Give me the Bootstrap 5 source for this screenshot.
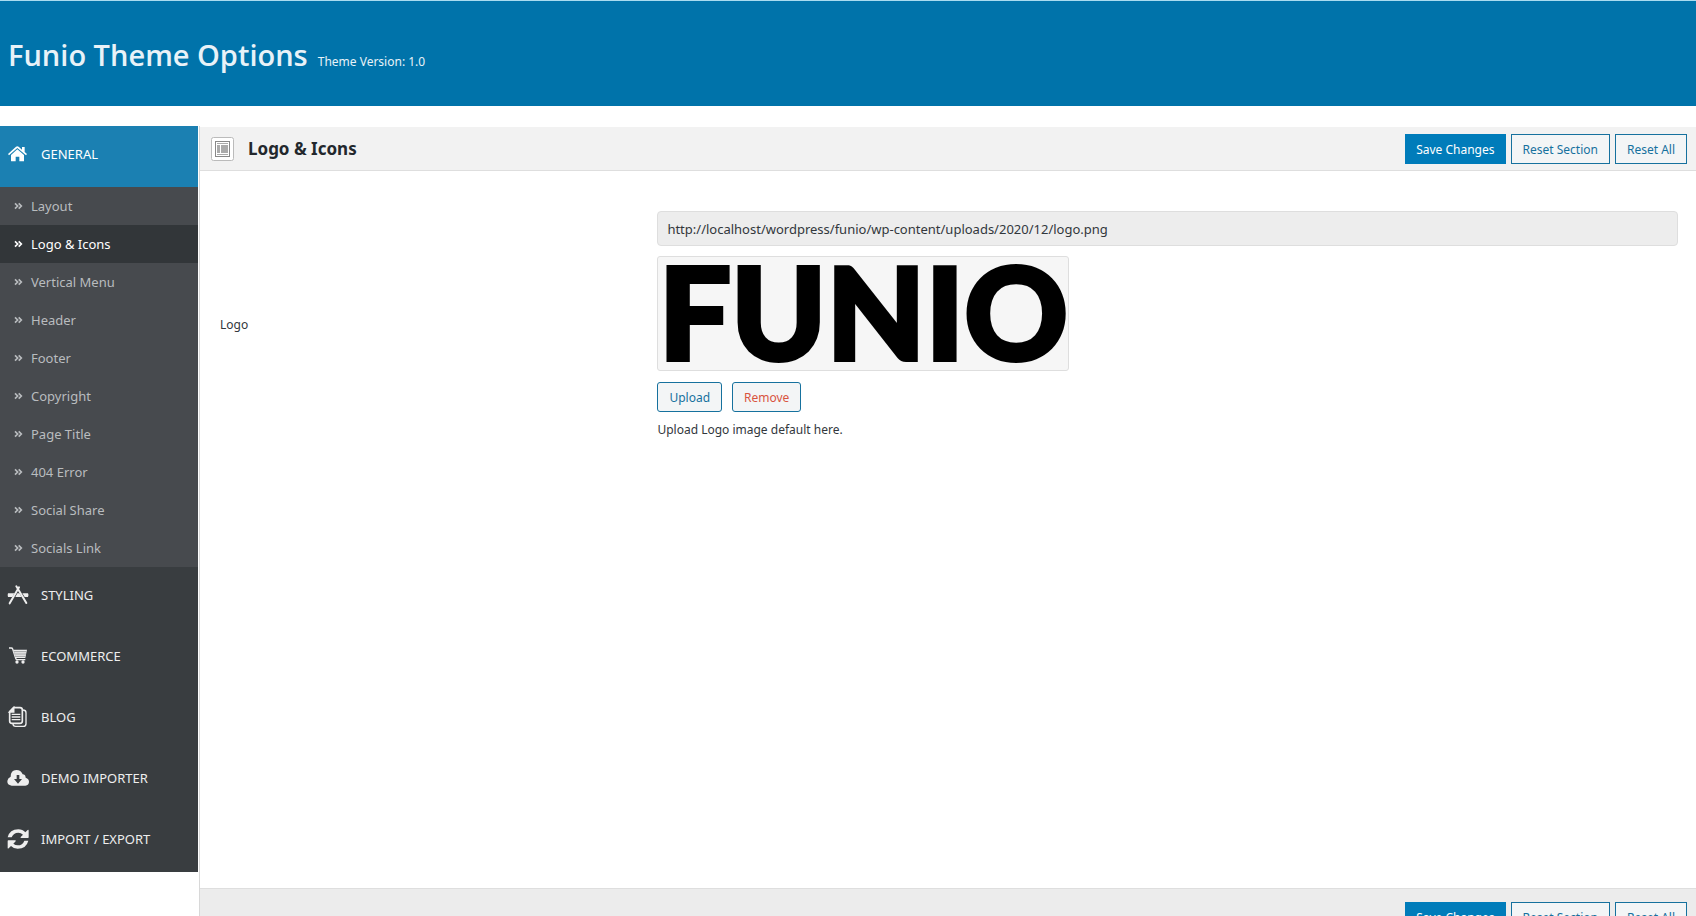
<!DOCTYPE html>
<html lang="en">
<head>
<meta charset="utf-8">
<meta name="viewport" content="width=device-width, initial-scale=1">
<title>Funio Theme Options</title>
<link href="https://cdn.jsdelivr.net/npm/bootstrap@5.3.0/dist/css/bootstrap.min.css" rel="stylesheet">
<style>
  body { font-family: "Noto Sans", "Open Sans", sans-serif; font-size: 12px; line-height: 18px; color: #32373c; }
  .page { height: calc(100vh + 32px); }
  .top-bar { height: 106px; background: #0073aa; border-top: 1px solid #a9dcf0; color: #e8f2f8; padding-top: 2px; }
  .top-bar h1 { font-family: "Open Sans", sans-serif; font-size: 29px; line-height: 40px; font-weight: 600; }
  .top-title { gap: 10px; }
  .body-area { padding-top: 20px; }
  .side { width: 198px; margin-right: 1px; }
  .side a { text-decoration: none; font-size: 13px; }
  .group-link { height: 61px; padding: 0 7px 5px; gap: 12px; background: #393d40; color: #eee; }
  .group-link.current { background: #1b80b2; color: #fff; }
  .group-link svg { width: 22px; height: 22px; flex: none; }
  .sub-link { height: 38px; padding: 0 14px; gap: 8px; background: #474a4e; color: #b9bcbf; }
  .sub-link.current { background: #323639; color: #fff; }
  .sub-link svg { width: 9px; height: 8px; flex: none; }
  .panel { border-left: 1px solid #d8d8d8; }
  .info-bar { height: 45px; background: #f2f2f2; border-bottom: 1px solid #dedede; border-top: 1px solid #fff; padding: 0 9px 0 11px; gap: 14px; }
  .info-bar h2 { font-size: 17px; line-height: 24px; font-weight: 700; color: #23282d; }
  .foot-bar { height: 60px; background: #ececec; border-top: 1px solid #dedede; padding: 13px 9px 0; }
  .act-row { gap: 5px; }
  .wp-btn { --bs-btn-font-size: 12px; --bs-btn-line-height: 26px; --bs-btn-padding-x: 11px; --bs-btn-border-radius: 0;
    --bs-btn-color: #16719e; --bs-btn-bg: #f3f5f6; --bs-btn-border-color: #16719e; padding-top: 2px; padding-bottom: 0; }
  .wp-btn.primary { --bs-btn-padding-x: 10px; --bs-btn-color: #fff; --bs-btn-bg: #007cba; --bs-btn-border-color: #007cba; }
  .wp-btn.rounded-btn { --bs-btn-border-radius: 3px; }
  .wp-btn.remove { --bs-btn-color: #d9543f; }
  .field-row { padding: 40px 18px 0 20px; }
  .field-label { width: 30%; }
  .url-field { height: 35px; padding: 0 9px; font-size: 13px; background: #ededed; border-color: #dedede; border-radius: 4px; color: #32373c; }
  .preview { width: 412px; height: 115px; margin: 10px 0 11px; background: #f6f6f6; border: 1px solid #dedede; border-radius: 3px; }
  .preview span { font-family: Lato, sans-serif; font-weight: 900; font-size: 128px; line-height: 107px; color: #000; white-space: nowrap; -webkit-text-stroke: 4px #000; }
  .act-upload { gap: 10px; margin-bottom: 9px; }
</style>
</head>
<body class="overflow-hidden">
<svg class="d-none" aria-hidden="true">
  <symbol id="angles" viewBox="0 0 27 24"><path d="M3 4l8 8-8 8M14 4l8 8-8 8" fill="none" stroke="currentColor" stroke-width="5"/></symbol>
</svg>
<div class="page d-flex flex-column">
  <header class="top-bar d-flex align-items-center px-2">
    <div class="d-flex align-items-baseline top-title">
      <h1 class="mb-0">Funio Theme Options</h1>
      <span>Theme Version: 1.0</span>
    </div>
  </header>
  <div class="d-flex flex-grow-1 body-area">
    <nav class="side flex-shrink-0" aria-label="Theme options">
      <a href="#" class="group-link current d-flex align-items-center">
        <svg viewBox="0 0 66 66" fill="currentColor"><path d="M3 33L27 11q4-3 8 0l10 9v-8h8v15l7 6-3 4-26-22L6 37z"/><path d="M12 36l19-17 20 17v19H37V41H26v14H14q-2 0-2-2z"/></svg>GENERAL</a>
      <a href="#" class="sub-link d-flex align-items-center"><svg><use href="#angles"/></svg>Layout</a>
      <a href="#" class="sub-link current d-flex align-items-center"><svg><use href="#angles"/></svg>Logo &amp; Icons</a>
      <a href="#" class="sub-link d-flex align-items-center"><svg><use href="#angles"/></svg>Vertical Menu</a>
      <a href="#" class="sub-link d-flex align-items-center"><svg><use href="#angles"/></svg>Header</a>
      <a href="#" class="sub-link d-flex align-items-center"><svg><use href="#angles"/></svg>Footer</a>
      <a href="#" class="sub-link d-flex align-items-center"><svg><use href="#angles"/></svg>Copyright</a>
      <a href="#" class="sub-link d-flex align-items-center"><svg><use href="#angles"/></svg>Page Title</a>
      <a href="#" class="sub-link d-flex align-items-center"><svg><use href="#angles"/></svg>404 Error</a>
      <a href="#" class="sub-link d-flex align-items-center"><svg><use href="#angles"/></svg>Social Share</a>
      <a href="#" class="sub-link d-flex align-items-center"><svg><use href="#angles"/></svg>Socials Link</a>
      <a href="#" class="group-link d-flex align-items-center">
        <svg viewBox="0 0 66 66" fill="currentColor"><path d="M3 28h19l-6 11H3q-2-6 0-11zM31 28h6l7 11H25zM46 28h17q3 5 0 11H53z"/><path d="M36 10L8 58M28 7l30 50" fill="none" stroke="currentColor" stroke-width="6" stroke-linecap="round"/></svg>STYLING</a>
      <a href="#" class="group-link d-flex align-items-center">
        <svg viewBox="0 0 66 66"><path d="M6 9h7q3 0 4 3l9 28q1 4 5 4h24" fill="none" stroke="currentColor" stroke-width="4"/><path d="M19 14h41l-5 25H27z" fill="currentColor"/><path d="M20 20h38M22 27h35M25 34h30" stroke="#777a7c" stroke-width="2"/><circle cx="30" cy="51" r="5" fill="currentColor"/><circle cx="48" cy="51" r="5" fill="currentColor"/></svg>ECOMMERCE</a>
      <a href="#" class="group-link d-flex align-items-center">
        <svg viewBox="0 0 66 66" fill="none" stroke="currentColor" stroke-width="5"><path d="M20 5h19q7 0 7 7v33q0 7-7 7H15q-7 0-7-7V17z"/><path d="M8 18h12V5z" fill="currentColor"/><path d="M47 12q10 0 10 8v33q0 8-8 8H26q-8 0-8-7M14 25h26M14 33h26M14 41h26" stroke-width="4"/></svg>BLOG</a>
      <a href="#" class="group-link d-flex align-items-center">
        <svg viewBox="0 0 66 66" fill="currentColor"><path fill-rule="evenodd" d="M14 56Q0 54 1 42q1-9 10-13Q11 10 28 9q14 0 19 13 8 0 9 10 10 3 10 12 0 10-11 12zM29 24v12h-8l12 14 12-14h-8V24z"/></svg>DEMO IMPORTER</a>
      <a href="#" class="group-link d-flex align-items-center">
        <svg viewBox="0 0 66 66" fill="currentColor"><path d="M2 28Q8 4 34 4q13 0 21 9l7-7q3-2 3 2v20q0 2-2 2H43q-4 0-2-3l7-7q-6-6-14-6-15 0-20 14zM64 38Q58 62 32 62q-13 0-20-8l-7 7q-3 2-3-2V39q0-2 2-2h20q4 0 2 3l-7 7q6 5 13 5 15 0 20-14z"/></svg>IMPORT / EXPORT</a>
    </nav>
    <main class="panel d-flex flex-column flex-grow-1">
      <div class="info-bar d-flex align-items-center">
        <svg width="23" height="24" viewBox="0 0 23 24" fill="none"><rect x=".5" y=".5" width="22" height="23" rx="2" fill="#fff" stroke="#bbb"/><rect x="4.500" y="4.500" width="14" height="15" stroke="#888"/><path d="M6 6.500h11M6 17.500h11" stroke="#aaa"/><path d="M6 8h3v8H6zM10 8h7v8h-7z" fill="#aaa"/></svg>
        <h2 class="mb-0">Logo &amp; Icons</h2>
        <div class="d-flex ms-auto act-row">
          <button type="button" class="btn wp-btn primary">Save Changes</button>
          <button type="button" class="btn wp-btn">Reset Section</button>
          <button type="button" class="btn wp-btn">Reset All</button>
        </div>
      </div>
      <form class="field-row d-flex align-items-center">
        <label class="field-label flex-shrink-0" for="logo-url">Logo</label>
        <div class="flex-grow-1">
          <input id="logo-url" type="text" class="form-control url-field" readonly value="http://localhost/wordpress/funio/wp-content/uploads/2020/12/logo.png">
          <div class="preview d-flex justify-content-center"><span>FUNIO</span></div>
          <div class="d-flex act-upload">
            <button type="button" class="btn wp-btn rounded-btn">Upload</button>
            <button type="button" class="btn wp-btn rounded-btn remove">Remove</button>
          </div>
          <p class="mb-0">Upload Logo image default here.</p>
        </div>
      </form>
      <div class="foot-bar d-flex align-items-start mt-auto">
        <div class="d-flex ms-auto act-row">
          <button type="button" class="btn wp-btn primary">Save Changes</button>
          <button type="button" class="btn wp-btn">Reset Section</button>
          <button type="button" class="btn wp-btn">Reset All</button>
        </div>
      </div>
    </main>
  </div>
</div>
<script src="https://cdn.jsdelivr.net/npm/bootstrap@5.3.0/dist/js/bootstrap.bundle.min.js"></script>
</body>
</html>
